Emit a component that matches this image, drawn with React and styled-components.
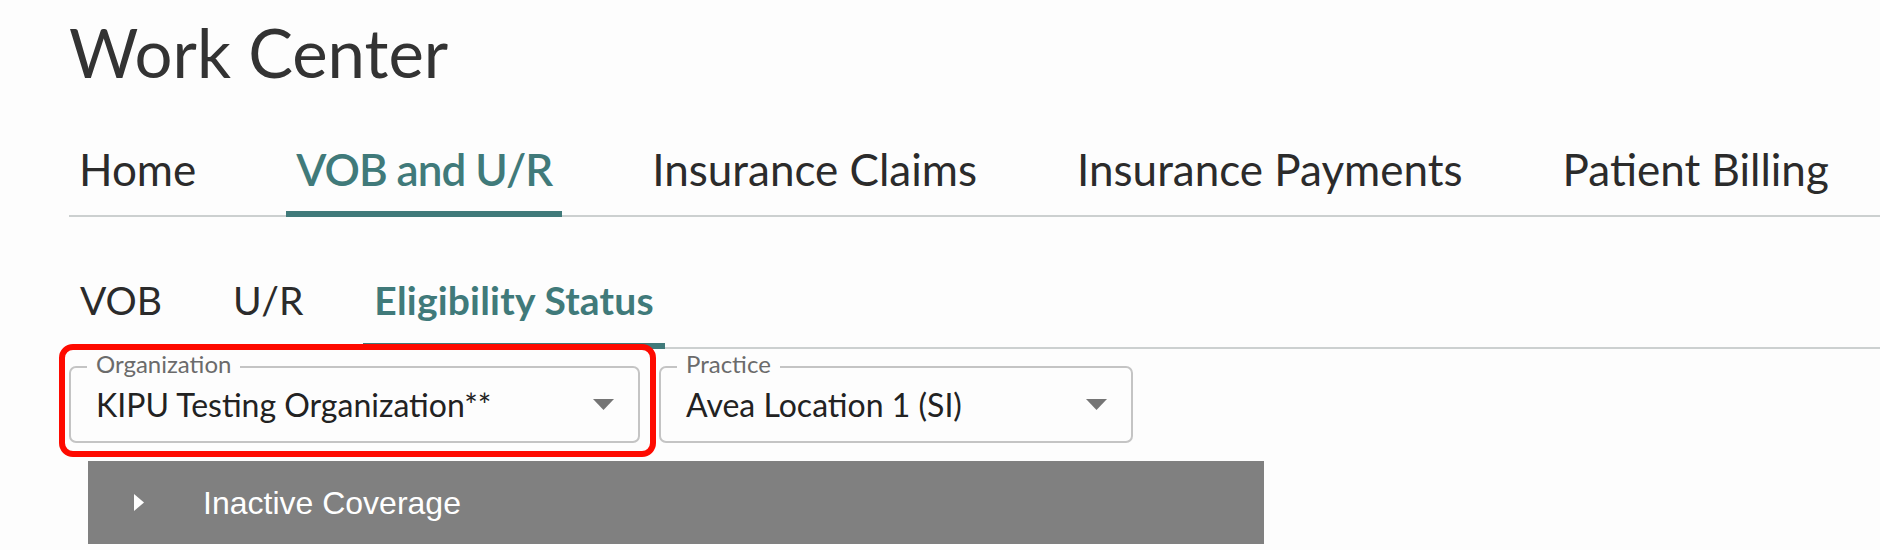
import React from "react";
import styled, { createGlobalStyle } from "styled-components";

const GlobalStyle = createGlobalStyle`
  body {
    margin: 0;
    background: #fdfdfd;
    font-family: Lato, "Open Sans", sans-serif;
  }
`;

const Page = styled.div`
  padding: 12px 0 0 69px;
`;

const Title = styled.h1`
  margin: 0 0 49px;
  font-size: 67px;
  line-height: 80px;
  font-weight: 400;
  color: #333;
`;

const TabList = styled.nav`
  display: flex;
  gap: ${(p) => p.$gap}px;
  box-shadow: inset 0 -2px 0 #ccd0d0;
  margin-top: ${(p) => p.$top || 0}px;
`;

const Tab = styled.div`
  padding: 0 ${(p) => p.$pad}px ${(p) => p.$bottom}px;
  font-size: ${(p) => p.$size}px;
  line-height: ${(p) => p.$line}px;
  font-weight: ${(p) => (p.$active ? p.$weight : 400)};
  letter-spacing: ${(p) => (p.$active ? p.$squeeze : 0)}px;
  color: ${(p) => (p.$active ? "#407a7a" : "#2b2b2b")};
  border-bottom: 6px solid ${(p) => (p.$active ? "#407a7a" : "transparent")};
  white-space: nowrap;
`;

const Filters = styled.div`
  display: flex;
  gap: 19px;
  margin-top: 17px;
`;

const Field = styled.div`
  position: relative;
  width: ${(p) => p.$width}px;
  height: 77px;
  box-sizing: border-box;
  border: 2px solid #c4c4c4;
  border-radius: 7px;
  display: flex;
  align-items: center;
  justify-content: space-between;
  padding: 0 24px 0 25px;

  ${(p) =>
    p.$highlight &&
    `
    &::before {
      content: "";
      position: absolute;
      left: -12px;
      right: -18px;
      top: -24px;
      bottom: -16px;
      border: 6px solid #fe0a00;
      border-radius: 14px;
      pointer-events: none;
    }
  `}
`;

const Label = styled.span`
  position: absolute;
  left: 16px;
  top: -16px;
  padding: 0 9px;
  background: #fdfdfd;
  font-size: 24px;
  line-height: 24px;
  color: #6b6b6b;
`;

const Value = styled.span`
  font-size: 32px;
  line-height: 38px;
  color: #222;
`;

const Caret = styled.svg`
  width: 21px;
  height: 11px;
  fill: #757575;
  flex-shrink: 0;
`;

const Section = styled.div`
  margin: 18px 0 0 19px;
  width: 1176px;
  height: 83px;
  background: #808080;
  display: flex;
  align-items: center;
  padding-left: 46px;
  box-sizing: border-box;
  color: #fff;
  font-family: "Liberation Sans", Arial, sans-serif;
  font-size: 32px;
  line-height: 32px;
`;

const Chevron = styled.svg`
  width: 10px;
  height: 17px;
  fill: #fff;
  margin-right: 59px;
`;

const mainTabs = ["Home", "VOB and U/R", "Insurance Claims", "Insurance Payments", "Patient Billing"];
const subTabs = ["VOB", "U/R", "Eligibility Status"];

function SelectField({ label, value, width, highlight }) {
  return (
    <Field $width={width} $highlight={highlight}>
      <Label>{label}</Label>
      <Value>{value}</Value>
      <Caret viewBox="0 0 21 11">
        <path d="M0 0h21L10.5 11z" />
      </Caret>
    </Field>
  );
}

export default function App() {
  return (
    <>
      <GlobalStyle />
      <Page>
        <Title>Work Center</Title>
        <TabList $gap={80}>
          {mainTabs.map((t) => (
            <Tab key={t} $pad={10} $size={44} $line={56} $bottom={14} $weight={600} $squeeze={-1} $active={t === "VOB and U/R"}>
              {t}
            </Tab>
          ))}
        </TabList>
        <TabList $gap={49} $top={59}>
          {subTabs.map((t) => (
            <Tab key={t} $pad={11} $size={39} $line={48} $bottom={19} $weight={700} $squeeze={0.2} $active={t === "Eligibility Status"}>
              {t}
            </Tab>
          ))}
        </TabList>
        <Filters>
          <SelectField label="Organization" value="KIPU Testing Organization**" width={571} highlight />
          <SelectField label="Practice" value="Avea Location 1 (SI)" width={474} />
        </Filters>
        <Section>
          <Chevron viewBox="0 0 10 17">
            <path d="M0 0l10 8.5L0 17z" />
          </Chevron>
          Inactive Coverage
        </Section>
      </Page>
    </>
  );
}
